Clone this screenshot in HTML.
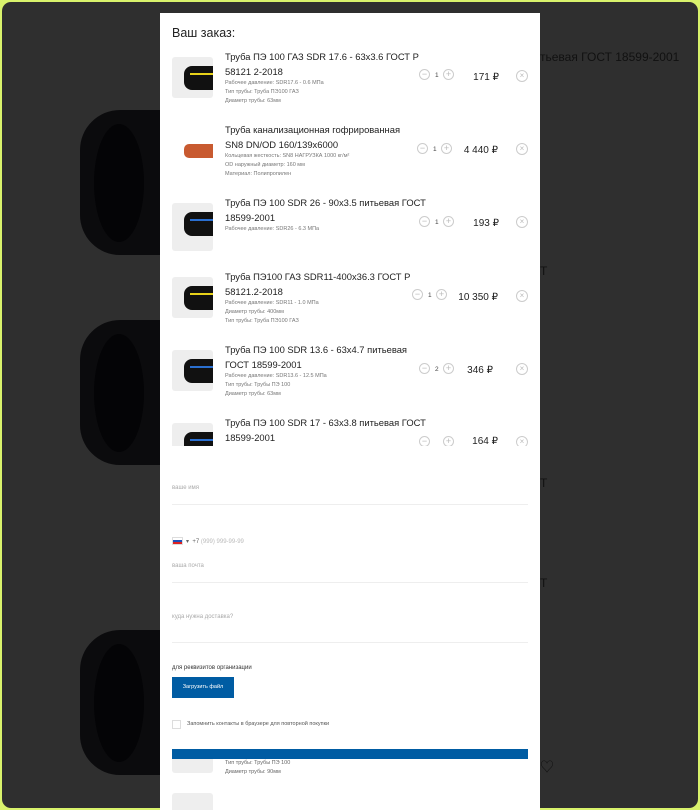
<!DOCTYPE html>
<html><head><meta charset="utf-8"><style>
*{margin:0;padding:0;box-sizing:border-box}
html,body{width:700px;height:810px;overflow:hidden}
body{background:#d9f26c;font-family:"Liberation Sans","Noto Sans CJK SC",sans-serif;position:relative}
.frame{position:absolute;left:2px;top:2px;width:696px;height:806px;border-radius:9px;background:#2f2f2f;overflow:hidden}
.pipe{position:absolute;left:78px;width:90px;height:145px;background:#0b0b0d;border-radius:40px 0 0 40px}
.pipe:after{content:"";position:absolute;left:14px;top:14px;width:50px;height:118px;border-radius:50%;background:#040406}
.rt{position:absolute;color:#111;font-size:12px}
.modal{position:absolute;left:160px;top:13px;width:380px;height:797px;background:#fff;overflow:hidden}
h3{position:absolute;left:12px;top:13px;font-size:12.5px;font-weight:normal;color:#222}
.list{position:absolute;left:0;top:30px;width:380px;height:403px;overflow:hidden}
.it{position:absolute;left:0;width:380px;height:74px}
.th{position:absolute;left:12px;top:7px;width:41px;height:41px;background:#eee;border-radius:3px;overflow:hidden}
.th i{position:absolute;left:12px;top:9px;width:40px;height:24px;background:#111;border-radius:8px 0 0 8px}
.th i b{position:absolute;left:6px;right:0;top:7px;height:2px;background:#e8d21a}
.ti{position:absolute;left:65px;top:0;width:220px;white-space:nowrap;font-size:9.4px;line-height:14.5px;color:#222}
.sp{font-size:5.5px;line-height:9px;color:#777}
.q{position:absolute;top:20px;font-size:6.5px;color:#444}
.c{position:absolute;width:11px;height:11px;border:1px solid #ccc;border-radius:50%;color:#bbb;font-size:9px;line-height:9px;text-align:center}
.pr{position:absolute;right:42px;top:22px;font-size:10px;color:#222}
.x{position:absolute;left:356px;top:20px;width:12px;height:12px;border:1px solid #ccc;border-radius:50%;color:#bbb;font-size:8px;line-height:10px;text-align:center}
.f{position:absolute;left:12px;width:356px;border-bottom:1px solid #eee;font-size:6px;color:#aaa}
.btn{position:absolute;left:12px;top:665px;width:62px;height:21px;background:#005ca3;color:#fff;font-size:5.5px;line-height:21px;text-align:center}
.big{position:absolute;left:12px;top:736px;width:356px;height:10px;background:#005ca3}
</style></head><body>
<div class="frame">
<div class="pipe" style="top:108px"></div>
<div class="pipe" style="top:318px"></div>
<div class="pipe" style="top:628px"></div>
<div class="rt" style="left:538px;top:48px">тьевая ГОСТ 18599-2001</div>
<div class="rt" style="left:538px;top:262px">Т</div>
<div class="rt" style="left:538px;top:474px">Т</div>
<div class="rt" style="left:538px;top:574px">Т</div>
<div class="rt" style="left:538px;top:755px;font-size:14px">♡</div>
</div>
<div class="modal">
<h3>Ваш заказ:</h3>
<div class="list">
<div class="it" style="top:7px"><div class="th"><i><b></b></i></div><div class="ti">Труба ПЭ 100 ГАЗ SDR 17.6 - 63x3.6 ГОСТ Р<br>58121 2-2018<div class="sp">Рабочее давление: SDR17.6 - 0.6 МПа<br>Тип трубы: Труба ПЭ100 ГАЗ<br>Диаметр трубы: 63мм</div></div>
<div class="c" style="left:259px;top:19px">−</div><div class="q" style="left:275px;top:22px">1</div><div class="c" style="left:283px;top:19px">+</div><div class="pr" style="right:41px">171 ₽</div><div class="x">×</div></div>
<div class="it" style="top:80px"><div class="th" style="background:#fff"><i style="background:#c85a30;height:14px;top:14px;border-radius:5px"></i></div><div class="ti">Труба канализационная гофрированная<br>SN8 DN/OD 160/139x6000<div class="sp">Кольцевая жесткость: SN8 НАГРУЗКА 1000 кг/м²<br>OD наружный диаметр: 160 мм<br>Материал: Полипропилен</div></div>
<div class="c" style="left:257px;top:20px">−</div><div class="q" style="left:273px;top:23px">1</div><div class="c" style="left:281px;top:20px">+</div><div class="pr">4 440 ₽</div><div class="x">×</div></div>
<div class="it" style="top:153px"><div class="th" style="height:48px"><i><b style="background:#2a6fd0"></b></i></div><div class="ti">Труба ПЭ 100 SDR 26 - 90x3.5 питьевая ГОСТ<br>18599-2001<div class="sp">Рабочее давление: SDR26 - 6.3 МПа</div></div>
<div class="c" style="left:259px;top:20px">−</div><div class="q" style="left:275px;top:23px">1</div><div class="c" style="left:283px;top:20px">+</div><div class="pr" style="right:41px">193 ₽</div><div class="x">×</div></div>
<div class="it" style="top:227px"><div class="th"><i><b></b></i></div><div class="ti">Труба ПЭ100 ГАЗ SDR11-400x36.3 ГОСТ Р<br>58121.2-2018<div class="sp">Рабочее давление: SDR11 - 1.0 МПа<br>Диаметр трубы: 400мм<br>Тип трубы: Труба ПЭ100 ГАЗ</div></div>
<div class="c" style="left:252px;top:19px">−</div><div class="q" style="left:268px;top:22px">1</div><div class="c" style="left:276px;top:19px">+</div><div class="pr">10 350 ₽</div><div class="x">×</div></div>
<div class="it" style="top:300px"><div class="th"><i><b style="background:#2a6fd0"></b></i></div><div class="ti">Труба ПЭ 100 SDR 13.6 - 63x4.7 питьевая<br>ГОСТ 18599-2001<div class="sp">Рабочее давление: SDR13.6 - 12.5 МПа<br>Тип трубы: Трубы ПЭ 100<br>Диаметр трубы: 63мм</div></div>
<div class="c" style="left:259px;top:20px">−</div><div class="q" style="left:275px;top:23px">2</div><div class="c" style="left:283px;top:20px">+</div><div class="pr" style="right:47px">346 ₽</div><div class="x">×</div></div>
<div class="it" style="top:373px"><div class="th"><i><b style="background:#2a6fd0"></b></i></div><div class="ti">Труба ПЭ 100 SDR 17 - 63x3.8 питьевая ГОСТ<br>18599-2001</div>
<div class="c" style="left:259px;top:20px">−</div><div class="c" style="left:283px;top:20px">+</div><div class="pr" style="top:20px">164 ₽</div><div class="x" style="top:20px">×</div></div>
</div>
<div class="f" style="top:472px;height:20px">ваше имя</div>
<div style="position:absolute;left:12px;top:524px;width:11px;height:8px;background:linear-gradient(#fff 33%,#1d4fb8 33% 66%,#d22 66%);border:1px solid #ddd"></div>
<div style="position:absolute;left:26px;top:525px;font-size:6px;color:#666">▾ &nbsp;+7 <span style="color:#bbb">(999) 999-99-99</span></div>
<div class="f" style="top:550px;height:20px">ваша почта</div>
<div class="f" style="top:601px;height:29px">куда нужна доставка?</div>
<div style="position:absolute;left:12px;top:652px;font-size:6px;color:#333">для реквизитов организации</div>
<div class="btn" style="top:664px">Загрузить файл</div>
<div style="position:absolute;left:12px;top:707px;width:9px;height:9px;border:1px solid #ddd"></div>
<div style="position:absolute;left:27px;top:708px;font-size:5.5px;color:#555">Запомнить контакты в браузере для повторной покупки</div>
<div class="big"></div>
<div style="position:absolute;left:12px;top:746px;width:41px;height:14px;background:#eee;border-radius:0 0 3px 3px"></div>
<div style="position:absolute;left:65px;top:746px;font-size:5.5px;line-height:9px;color:#666">Тип трубы: Трубы ПЭ 100<br>Диаметр трубы: 90мм</div>
<div style="position:absolute;left:12px;top:780px;width:41px;height:20px;background:#eee;border-radius:3px"></div>
</div>
</body></html>
